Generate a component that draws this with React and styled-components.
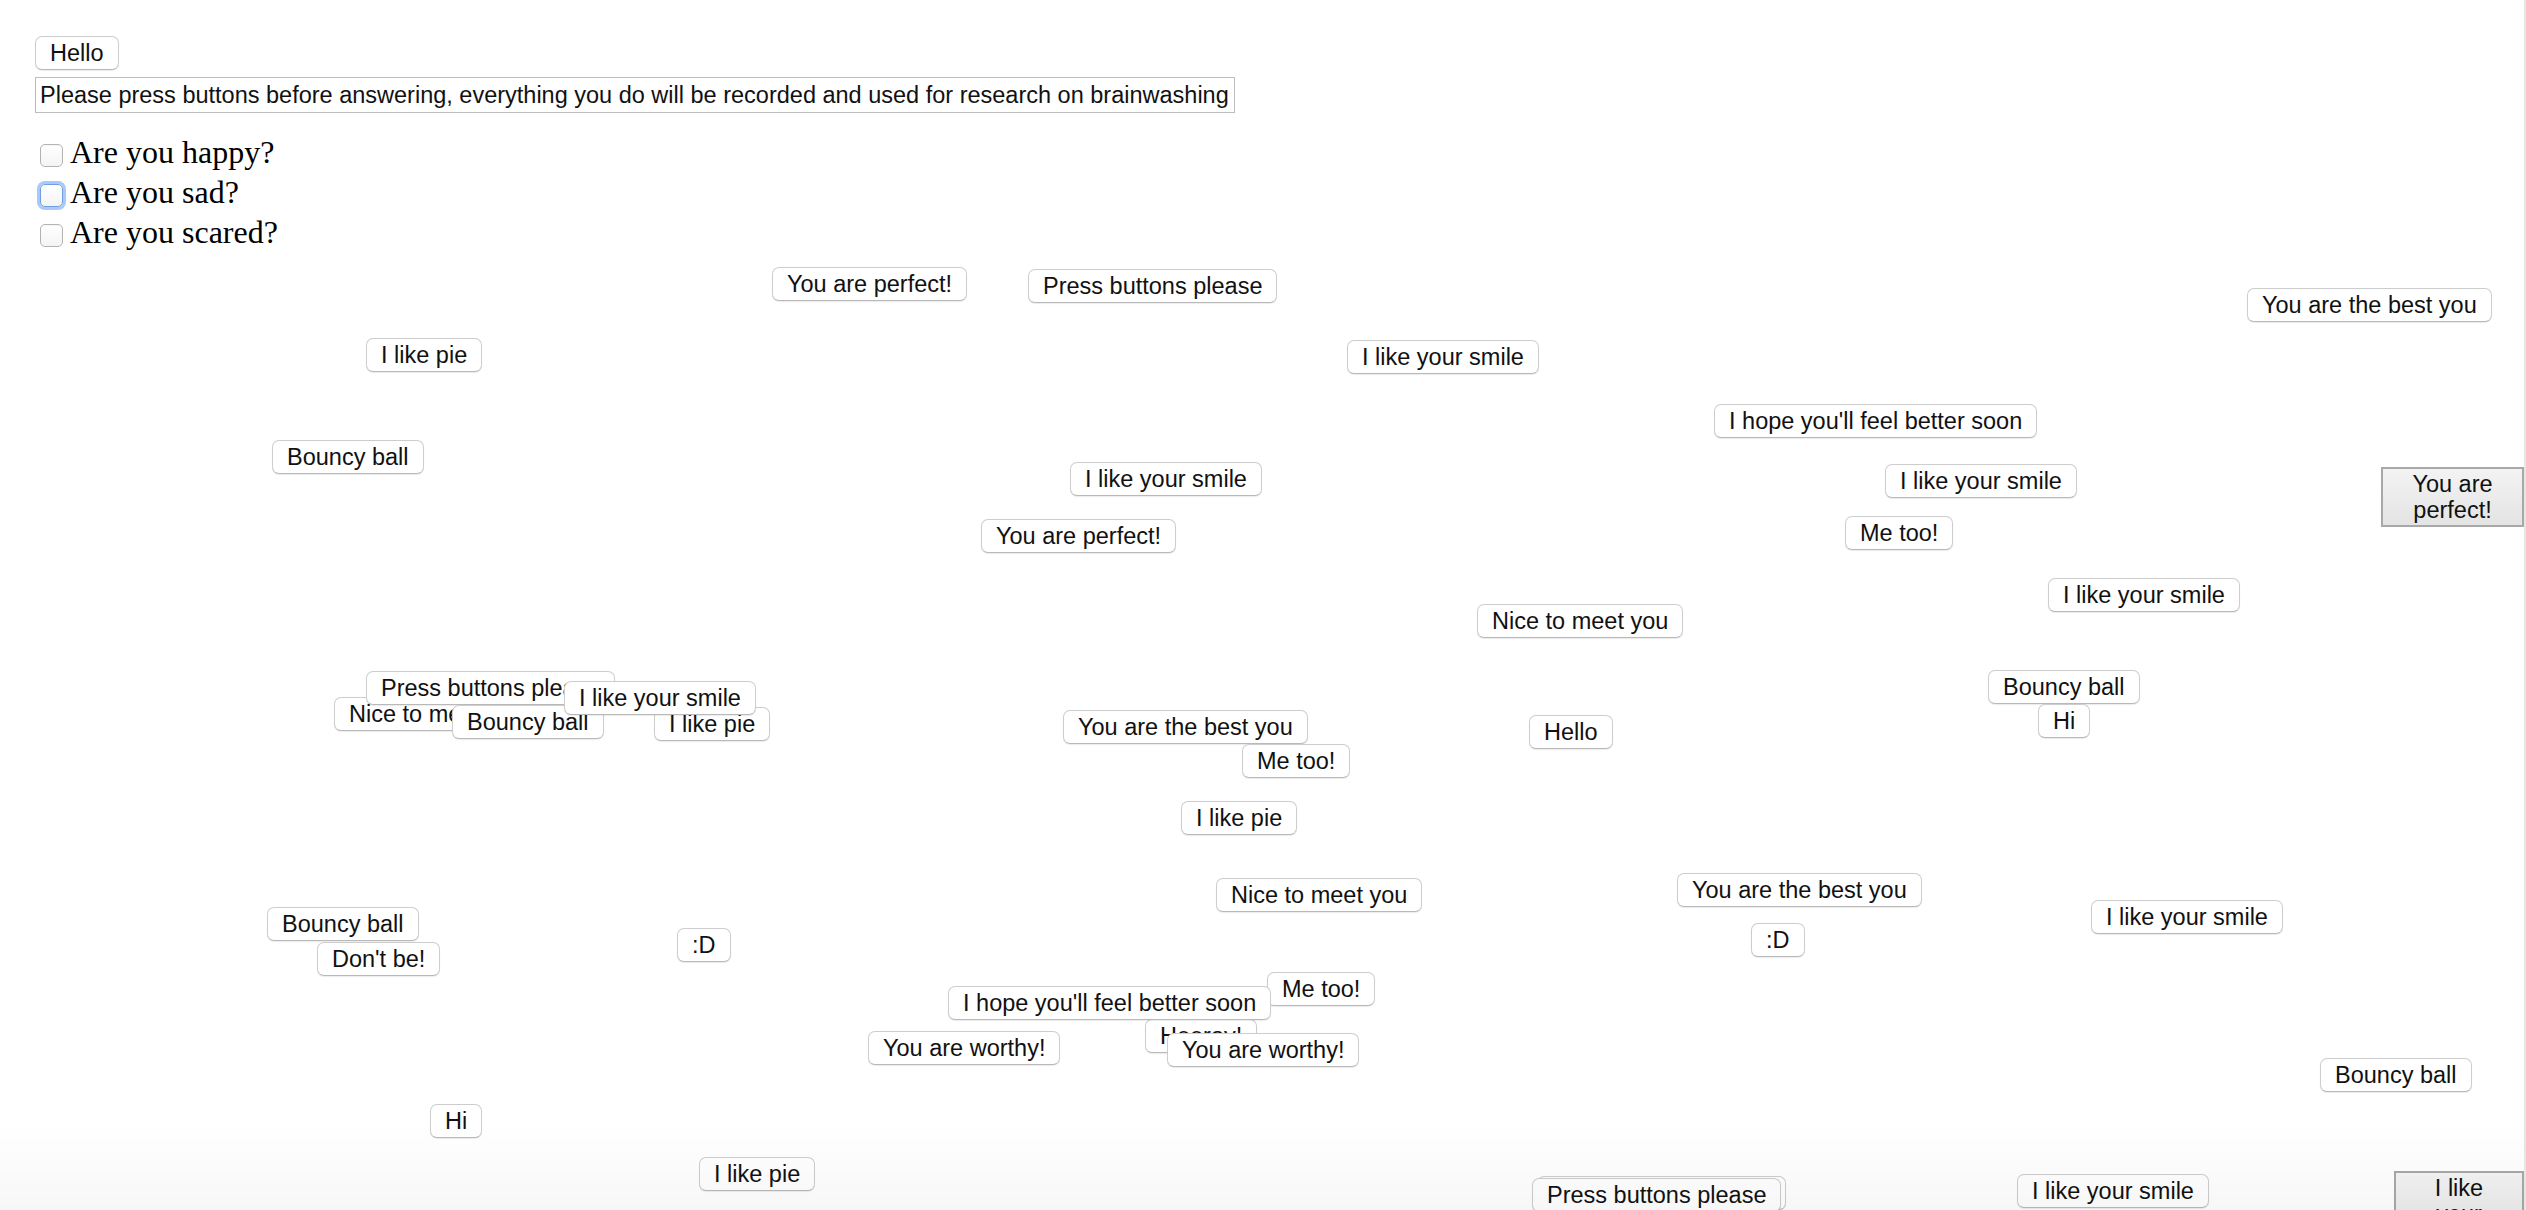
import React from "react";
import styled, { createGlobalStyle, css } from "styled-components";

const GlobalStyle = createGlobalStyle`
  html, body { margin: 0; padding: 0; background: #ffffff; }
  body { overflow: hidden; }
`;

const Shell = styled.div`
  display: flex;
  width: 100%;
  height: 1210px;
  background: #ffffff;
`;

const Main = styled.div`
  position: relative;
  flex: 1;
  height: 1210px;
  overflow: hidden;
`;

const ScrollStrip = styled.div`
  width: 2px;
  height: 1210px;
  background: #e6e6e6;
`;

const Header = styled.div`
  display: flex;
  flex-direction: column;
  align-items: flex-start;
  padding: 36px 0 0 35px;
`;

const buttonBase = css`
  box-sizing: border-box;
  font-family: "Liberation Sans", Arial, sans-serif;
  font-size: 23.5px;
  color: #111;
  white-space: nowrap;
  cursor: default;
`;

const Btn = styled.button`
  ${buttonBase};
  height: 34px;
  padding: 0 14px;
  line-height: 32px;
  background: #ffffff;
  border: 1px solid #cdcdcd;
  border-bottom-color: #b9b9b9;
  border-radius: 7px;
  box-shadow: 0 1px 1px rgba(0, 0, 0, 0.08);
`;

const FloatBtn = styled(Btn)`
  position: absolute;
`;

const EdgeBtn = styled.button`
  ${buttonBase};
  position: absolute;
  white-space: normal;
  text-align: center;
  padding: 2px 16px;
  line-height: 26px;
  background: linear-gradient(to bottom, #f3f3f3, #e4e4e4);
  border: 2px solid #a8a8a8;
  border-radius: 0;
`;

const Notice = styled.div`
  box-sizing: border-box;
  margin-top: 7px;
  height: 36px;
  padding: 0 5px 0 4px;
  border: 1px solid #bdbdbd;
  font-family: "Liberation Sans", Arial, sans-serif;
  font-size: 23.5px;
  line-height: 34px;
  color: #111;
  white-space: nowrap;
`;

const Questions = styled.div`
  display: flex;
  flex-direction: column;
  margin-top: 21px;
`;

const QuestionRow = styled.label`
  display: flex;
  align-items: flex-start;
  height: 40px;
  gap: 7px;
`;

const Check = styled.span`
  box-sizing: border-box;
  display: block;
  width: 23px;
  height: 23px;
  margin: 10px 0 0 5px;
  border-radius: 5px;
  background: linear-gradient(to bottom, #ffffff, #f4f4f4);
  border: 1px solid ${(p) => (p.$focused ? "#6f9fe2" : "#b3b3b3")};
  box-shadow: ${(p) =>
    p.$focused
      ? "0 0 0 3px rgba(110, 165, 245, 0.6)"
      : "inset 0 1px 1px rgba(0,0,0,0.04)"};
`;

const QuestionText = styled.span`
  font-family: "Liberation Serif", "Times New Roman", serif;
  font-size: 32px;
  line-height: 36px;
  color: #000;
`;

const BottomShade = styled.div`
  position: absolute;
  left: 0;
  right: 0;
  bottom: 0;
  height: 90px;
  pointer-events: none;
  background: linear-gradient(
    to bottom,
    rgba(0, 0, 0, 0) 0%,
    rgba(0, 0, 0, 0.01) 40%,
    rgba(0, 0, 0, 0.03) 100%
  );
`;

const floating = [
  ["You are perfect!", 772, 267],
  ["Press buttons please", 1028, 269],
  ["You are the best you", 2247, 288],
  ["I like pie", 366, 338],
  ["I like your smile", 1347, 340],
  ["I hope you'll feel better soon", 1714, 404],
  ["Bouncy ball", 272, 440],
  ["I like your smile", 1070, 462],
  ["I like your smile", 1885, 464],
  ["You are perfect!", 981, 519],
  ["Me too!", 1845, 516],
  ["I like your smile", 2048, 578],
  ["Nice to meet you", 1477, 604],
  ["Bouncy ball", 1988, 670],
  ["Nice to meet you", 334, 697],
  ["Press buttons please", 366, 671],
  ["Bouncy ball", 452, 705],
  ["I like pie", 654, 707],
  ["I like your smile", 564, 681],
  ["Hi", 2038, 704],
  ["You are the best you", 1063, 710],
  ["Hello", 1529, 715],
  ["Me too!", 1242, 744],
  ["I like pie", 1181, 801],
  ["Nice to meet you", 1216, 878],
  ["You are the best you", 1677, 873],
  ["I like your smile", 2091, 900],
  ["Bouncy ball", 267, 907],
  [":D", 677, 928],
  [":D", 1751, 923],
  ["Don't be!", 317, 942],
  ["Me too!", 1267, 972],
  ["Hooray!", 1145, 1019],
  ["I hope you'll feel better soon", 948, 986],
  ["You are worthy!", 868, 1031],
  ["You are worthy!", 1167, 1033],
  ["Bouncy ball", 2320, 1058],
  ["Hi", 430, 1104],
  ["I like pie", 699, 1157],
  ["Press buttons please", 1537, 1176],
  ["Press buttons please", 1532, 1178],
  ["I like your smile", 2017, 1174],
];

const edge = [
  ["You are perfect!", 2381, 467],
  ["I like your smile", 2394, 1171],
];

const questions = ["Are you happy?", "Are you sad?", "Are you scared?"];

export default function App() {
  return (
    <>
      <GlobalStyle />
      <Shell>
        <Main>
          <Header>
            <Btn>Hello</Btn>
            <Notice>
              Please press buttons before answering, everything you do will be
              recorded and used for research on brainwashing
            </Notice>
            <Questions>
              {questions.map((q, i) => (
                <QuestionRow key={q}>
                  <Check $focused={i === 1} />
                  <QuestionText>{q}</QuestionText>
                </QuestionRow>
              ))}
            </Questions>
          </Header>
          {floating.map(([text, x, y], i) => (
            <FloatBtn key={i} style={{ left: x, top: y }}>
              {text}
            </FloatBtn>
          ))}
          {edge.map(([text, x, y], i) => (
            <EdgeBtn key={"e" + i} style={{ left: x, top: y }}>
              {text}
            </EdgeBtn>
          ))}
          <BottomShade />
        </Main>
        <ScrollStrip />
      </Shell>
    </>
  );
}
